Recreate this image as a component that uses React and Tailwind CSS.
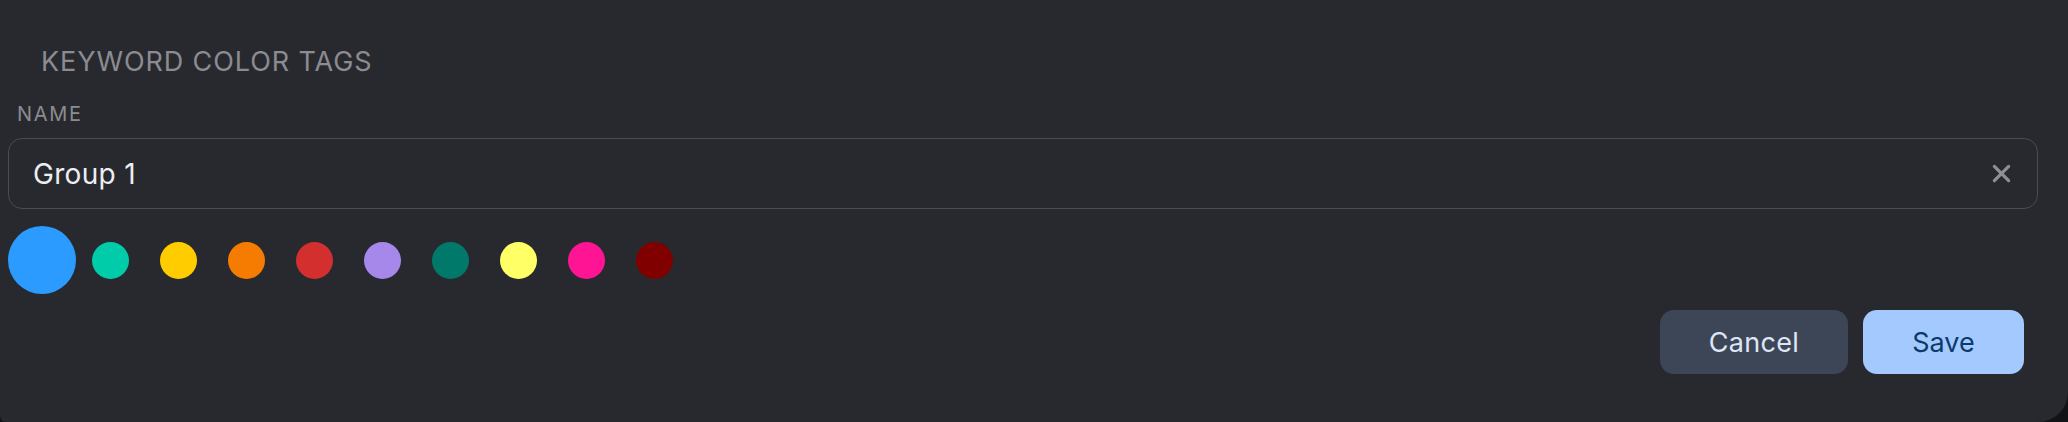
import React from "react";

const colors = [
  "#00ccaa",
  "#ffcc00",
  "#f57c00",
  "#d32f2f",
  "#a688ea",
  "#00796b",
  "#ffff66",
  "#ff1493",
  "#800000",
];

export default function App() {
  return (
    <div className="w-[2068px] h-[422px] bg-[#121316]">
      <div
        className="h-full bg-[#28292e] rounded-br-[30px] rounded-bl-[6px] flex flex-col"
        style={{ fontFamily: "Inter, 'Noto Sans', sans-serif" }}
      >
        <div className="pl-[41px] pt-[48px] h-[76px] text-[27px] leading-none text-[#8b8c91] tracking-[0.9px]">
          KEYWORD COLOR TAGS
        </div>
        <div className="pl-[17px] mt-[28px] h-[20px] text-[20px] leading-none text-[#8b8c91] tracking-[1.7px]">
          NAME
        </div>
        <div className="ml-[8px] mr-[30px] mt-[14px] h-[71px] rounded-[14px] border border-[#494c52] flex items-center pl-[24px] pr-[26px]">
          <span className="flex-1 text-[28px] leading-none text-[#eceef2] tracking-[0.3px]">Group 1</span>
          <svg width="19" height="19" viewBox="0 0 20 20" className="shrink-0">
            <path d="M2.5 2.5 L17.5 17.5 M17.5 2.5 L2.5 17.5" stroke="#8e8f94" strokeWidth="3.4" strokeLinecap="round" />
          </svg>
        </div>
        <div className="ml-[8px] mt-[17px] flex items-center">
          <div className="w-[68px] h-[68px] rounded-full bg-[#2b9bff]" />
          {colors.map((c) => (
            <div key={c} className="w-[68px] h-[68px] flex items-center justify-center">
              <div className="w-[37px] h-[37px] rounded-full" style={{ backgroundColor: c }} />
            </div>
          ))}
        </div>
        <div className="mt-[16px] pr-[44px] flex justify-end gap-[15px]">
          <button className="w-[188px] h-[64px] rounded-[14px] bg-[#3d4657] text-[27px] text-[#dde6f7] leading-none tracking-[0.3px]">
            Cancel
          </button>
          <button className="w-[161px] h-[64px] rounded-[14px] bg-[#a3c9ff] text-[27px] text-[#0b3a6b] leading-none">
            Save
          </button>
        </div>
      </div>
    </div>
  );
}
